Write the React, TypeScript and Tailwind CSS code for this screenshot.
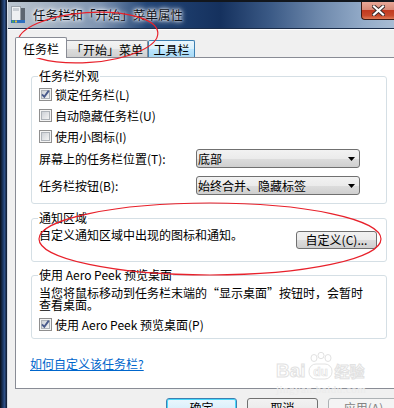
import React from "react";

// Windows 7 style "Taskbar and Start Menu Properties" dialog

function CheckBox({ checked }: { checked?: boolean }) {
  return (
    <svg width="13" height="13" viewBox="0 0 13 13" className="shrink-0">
      <defs>
        <linearGradient id="cbg" x1="0" y1="0" x2="1" y2="1">
          <stop offset="0" stopColor="#cbcfd5" />
          <stop offset="1" stopColor="#f6f6f6" />
        </linearGradient>
      </defs>
      <rect x="0.5" y="0.5" width="12" height="12" fill="#f4f4f4" stroke="#8f8f8f" />
      <rect x="2.5" y="2.5" width="8" height="8" fill="url(#cbg)" stroke="#aeb3b9" />
      {checked && (
        <path d="M3 6.3 L5.3 8.8 L9.8 2.6" fill="none" stroke="#4a5b8c" strokeWidth="1.9" />
      )}
    </svg>
  );
}

function Check({ label, checked }: { label: string; checked?: boolean }) {
  return (
    <div className="h-[21px] flex items-center gap-[3px]">
      <CheckBox checked={checked} />
      <span>{label}</span>
    </div>
  );
}

function Combo({ value }: { value: string }) {
  return (
    <div className="w-[164px] h-[19px] border border-[#707070] rounded-[3px] bg-[linear-gradient(180deg,#f2f2f2_0%,#ebebeb_50%,#dddddd_51%,#cfcfcf_100%)] flex items-center pl-[1px] pr-[4px]">
      <span>{value}</span>
      <svg width="7" height="4" viewBox="0 0 7 4" className="ml-auto">
        <path d="M0 0 H7 L3.5 4 Z" fill="#000" />
      </svg>
    </div>
  );
}

export default function App() {
  return (
    <div className="w-[394px] h-[408px] overflow-hidden relative flex bg-[#0c1524] font-['Noto_Sans_CJK_SC','Noto_Sans',sans-serif] text-[12px] leading-[12px] text-black">
      {/* desktop strip behind the window */}
      <div className="w-[7px] h-full shrink-0 bg-[linear-gradient(90deg,#080d16_0%,#1d3a68_45%,#2d4f86_65%,#0e1626_100%)]" />

      <div className="flex-1 min-w-0 flex flex-col border-l border-[#d6dde6]">
        {/* title bar */}
        <div className="h-[29px] shrink-0 border-t-2 border-[#12161c] border-b border-b-[#1b2d4a] bg-[linear-gradient(90deg,#bcc6d0_0%,#a5b3c3_10%,#7d93b1_24%,#234677_36%,#15315e_55%,#3b5a86_68%,#6b86aa_80%,#93abc8_92%,#a8bcd4_100%)] flex items-start">
          <svg width="15" height="18" viewBox="0 0 15 18" className="ml-[3px] mt-[4px] shrink-0">
            <rect x="0.5" y="0.5" width="9" height="15" fill="#eef0f2" stroke="#9aa2aa" />
            <rect x="2" y="2" width="6" height="3" fill="#c9ced4" />
            <rect x="10" y="2" width="4" height="13" fill="#5d6670" />
            <rect x="0" y="14" width="14" height="3" fill="#2e6fc0" />
            <rect x="1" y="14.5" width="2" height="2" fill="#4fb04a" />
            <rect x="4" y="14.5" width="2" height="2" fill="#e2c23a" />
          </svg>
          <div className="ml-[7px] mt-[6px] text-[12.5px] leading-[14px] text-[#10131a] [text-shadow:0_0_6px_#fff,0_0_4px_#fff,0_0_2px_#dfe7f0] whitespace-nowrap">
            任务栏和「开始」菜单属性
          </div>
          <div className="ml-auto w-[33px] h-[18px] border border-[#3b1a14] border-t-0 border-r-0 rounded-bl-[4px] bg-[linear-gradient(180deg,#e8a898_0%,#d88a78_45%,#c23a20_50%,#c84a2c_80%,#e07a56_100%)] flex items-center justify-center">
            <svg width="13" height="11" viewBox="0 0 13 11">
              <path d="M2 1.5 L11 9.5 M11 1.5 L2 9.5" stroke="#3a2a2a" strokeWidth="4" strokeLinecap="square" />
              <path d="M2 1.5 L11 9.5 M11 1.5 L2 9.5" stroke="#ffffff" strokeWidth="2.2" strokeLinecap="square" />
            </svg>
          </div>
        </div>

        {/* client area */}
        <div className="flex-1 bg-[#f0f0f0] border-t border-white pl-[7px] pt-[7px] flex flex-col">
          {/* tabs */}
          <div className="h-[20px] flex items-end">
            <div className="relative z-10 h-[21px] w-[52px] mb-[-1px] bg-white border border-b-0 border-[#898c95] rounded-t-[2px] flex items-center justify-center pt-[1px]">
              任务栏
            </div>
            <div className="h-[17px] w-[81px] border border-b-0 border-l-0 border-[#898c95] rounded-tr-[2px] bg-[linear-gradient(180deg,#f3f3f3_0%,#ebebeb_50%,#dddddd_51%,#d0d0d0_100%)] flex items-center justify-center pt-[2px] whitespace-nowrap">
              「开始」菜单
            </div>
            <div className="h-[17px] w-[47px] border border-b-0 border-[#3c7fb1] rounded-t-[2px] bg-[linear-gradient(180deg,#eaf6fd_0%,#d9f0fc_50%,#bee6fd_51%,#a7d9f5_100%)] flex items-center justify-center pt-[2px]">
              工具栏
            </div>
          </div>

          {/* tab page */}
          <div className="w-[390px] h-[332px] shrink-0 border border-[#898c95] bg-white pl-[15px]">
            <fieldset className="mt-[12px] w-[356px] border border-[#d5dfe5] rounded-[3px] pl-[7px] pr-[9px] pt-[2px] pb-[8px]">
              <legend className="px-[1px] -ml-[1px]">任务栏外观</legend>
              <Check label="锁定任务栏(L)" checked />
              <Check label="自动隐藏任务栏(U)" />
              <Check label="使用小图标(I)" />
              <div className="mt-[2px] h-[19px] flex items-center">
                <span className="w-[157px]">屏幕上的任务栏位置(T):</span>
                <Combo value="底部" />
              </div>
              <div className="mt-[8px] h-[19px] flex items-center">
                <span className="w-[157px]">任务栏按钮(B):</span>
                <Combo value="始终合并、隐藏标签" />
              </div>
            </fieldset>

            <fieldset className="mt-[8px] w-[356px] border border-[#d5dfe5] rounded-[3px] pl-[7px] pr-[9px] pb-[12px]">
              <legend className="px-[1px] -ml-[1px]">通知区域</legend>
              <div className="flex items-start justify-between">
                <span className="mt-[5px]">自定义通知区域中出现的图标和通知。</span>
                <div className="mt-[7px] w-[81px] h-[18px] border border-[#707070] rounded-[3px] bg-[linear-gradient(180deg,#f2f2f2_0%,#ebebeb_50%,#dddddd_51%,#cfcfcf_100%)] flex items-center justify-center">
                  自定义(C)...
                </div>
              </div>
            </fieldset>

            <fieldset className="mt-[7px] w-[356px] border border-[#d5dfe5] rounded-[3px] pl-[7px] pr-[9px] pb-[3px]">
              <legend className="px-[1px] -ml-[1px]">使用 Aero Peek 预览桌面</legend>
              <div className="mt-[6px] whitespace-nowrap">
                当您将鼠标移动到任务栏末端的“显示桌面”按钮时，会暂时
                <br />
                查看桌面。
              </div>
              <div className="mt-[3px]">
                <Check label="使用 Aero Peek 预览桌面(P)" checked />
              </div>
            </fieldset>

            <div className="mt-[19px] -ml-[1px] text-[#0066cc] underline">如何自定义该任务栏?</div>
          </div>

          {/* dialog buttons */}
          <div className="mt-[9px] ml-[151px] flex gap-[10px]">
            <div className="w-[71px] h-[23px] shrink-0 border border-[#3c7fb1] rounded-[3px] bg-[linear-gradient(180deg,#eaf6fd_0%,#d9f0fc_50%,#bee6fd_51%,#a7d9f5_100%)] shadow-[inset_0_0_0_1px_#48d8fb] flex justify-center pt-[3px]">
              确定
            </div>
            <div className="w-[71px] h-[23px] shrink-0 border border-[#707070] rounded-[3px] bg-[linear-gradient(180deg,#f2f2f2_0%,#ebebeb_50%,#dddddd_51%,#cfcfcf_100%)] flex justify-center pt-[3px]">
              取消
            </div>
            <div className="w-[71px] h-[23px] shrink-0 border border-[#adb2b5] rounded-[3px] bg-[#f4f4f4] text-[#838383] flex justify-center pt-[3px]">
              应用(A)
            </div>
          </div>
        </div>
      </div>

      {/* Baidu watermark */}
      <div className="absolute left-[276px] top-[352px] flex flex-col items-start pointer-events-none">
        <div className="flex items-end h-[28px]">
          <span className="font-['Liberation_Sans',sans-serif] font-bold text-[19px] leading-[18px] text-white [-webkit-text-stroke:1px_#e2e2e2]">Bai</span>
          <svg width="27" height="28" viewBox="0 0 27 28" className="mx-[1px]">
            <g fill="#fff" stroke="#e2e2e2" strokeWidth="1">
              <ellipse cx="7" cy="6" rx="3" ry="3.5" />
              <ellipse cx="14" cy="3.5" rx="3" ry="3.2" />
              <ellipse cx="21" cy="6" rx="3" ry="3.5" />
              <rect x="2" y="12" width="23" height="15" rx="7" />
            </g>
            <text x="13.5" y="24" textAnchor="middle" fontFamily="Liberation Sans" fontWeight="bold" fontSize="12" fill="#fff" stroke="#e2e2e2" strokeWidth="0.7">du</text>
          </svg>
          <span className="font-bold text-[15px] leading-[18px] text-white [-webkit-text-stroke:1px_#e2e2e2]">经验</span>
        </div>
        <div className="mt-[4px] font-['Liberation_Serif',serif] text-[11px] leading-[11px] text-[#ebebeb] tracking-[0.5px]">jingyan.baidu.com</div>
      </div>

      {/* red hand-drawn annotations */}
      <svg className="absolute left-0 top-0 pointer-events-none" width="394" height="408" viewBox="0 0 394 408">
        <ellipse cx="88" cy="37.5" rx="70" ry="25" transform="rotate(-4 88 37.5)" fill="none" stroke="#e8212b" strokeWidth="1.2" />
        <ellipse cx="210" cy="239" rx="171" ry="36" fill="none" stroke="#e8212b" strokeWidth="1.2" />
      </svg>
    </div>
  );
}
